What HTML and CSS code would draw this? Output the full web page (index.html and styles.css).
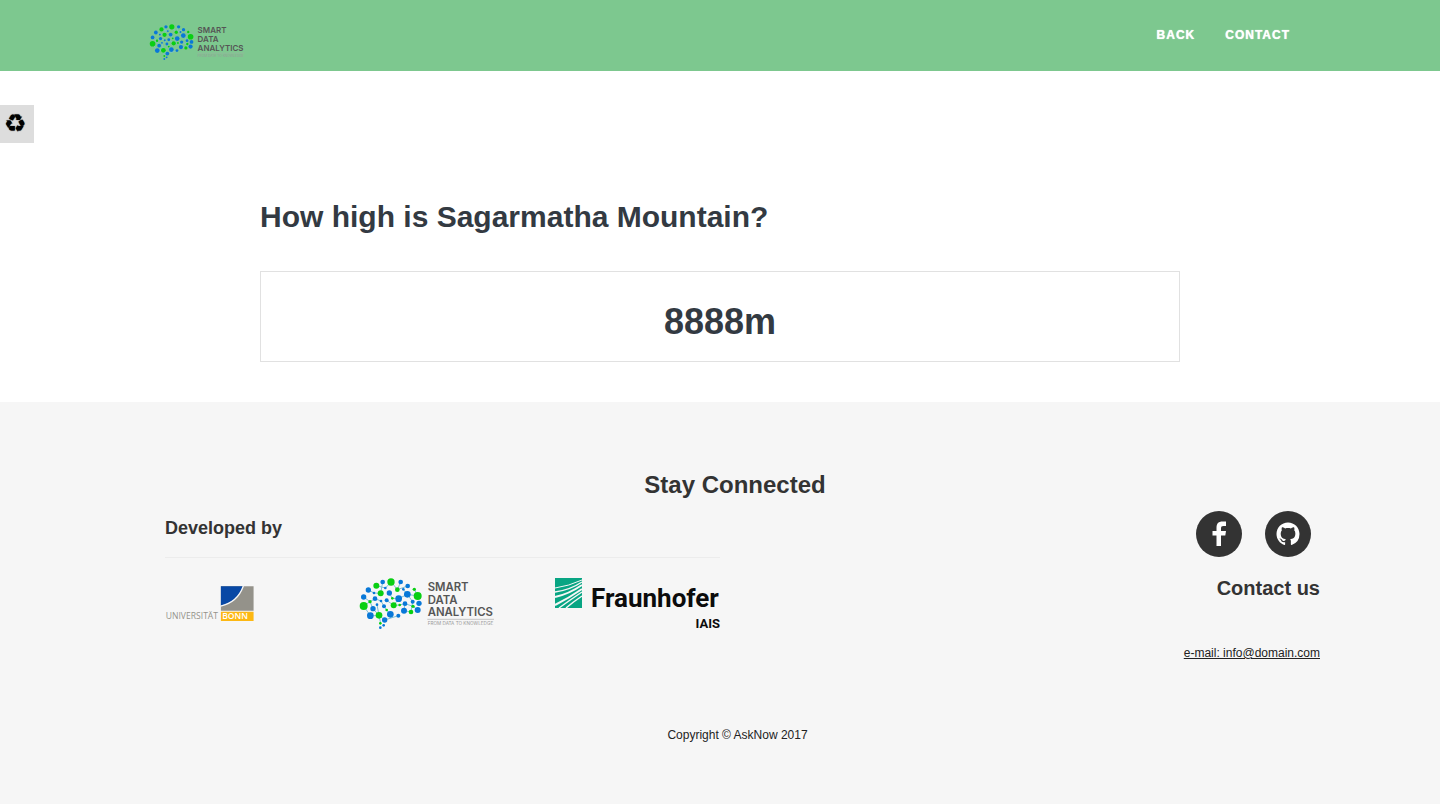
FILE: index.html
```html
<!DOCTYPE html>
<html lang="en">
<head>
<meta charset="utf-8">
<meta name="viewport" content="width=device-width, initial-scale=1">
<title>AskNow</title>
<link rel="stylesheet" href="styles.css">
</head>
<body>
<header class="topbar">
  <div class="topbar-inner">
    <a class="brand" href="#" aria-label="Smart Data Analytics"><svg class="brand-logo" viewBox="30 22 405 153"><use href="#sda"/></svg></a>
    <nav class="nav">
      <a href="#">BACK</a>
      <a href="#contact">CONTACT</a>
    </nav>
  </div>
</header>
<button class="recycle" type="button" aria-label="Reset">♻</button>

<main class="answer">
  <h1>How high is Sagarmatha Mountain?</h1>
  <div class="answer-box">8888m</div>
</main>

<footer class="footer" id="contact">
  <div class="footer-inner">
    <h2>Stay Connected</h2>
    <div class="footer-cols">
      <section class="developed">
        <h3>Developed by</h3>
        <hr>
        <div class="partners">
          <a href="#" aria-label="Universität Bonn">
            <svg class="bonn" viewBox="30 32 267 106">
              <path fill="#94928a" d="M198 33H297V107H198z"/>
              <path fill="#0848a5" d="M198 33H265Q248 80 198 92z"/>
              <path fill="none" stroke="#f6f6f6" stroke-width="4" d="M266 32Q249 81 197 93"/>
              <path fill="#fdb813" d="M198 110H297V138H198z"/>
              <text class="bonn-uni" x="31" y="132">UNIVERSITÄT</text>
              <text class="bonn-city" x="202" y="133">BONN</text>
            </svg>
          </a>
          <a href="#" aria-label="Smart Data Analytics">
            <svg class="sda" viewBox="30 22 405 153">
              <g id="sda">
                <path fill="none" stroke="#7fbfd6" stroke-width="3" d="M41 79L60 93L69 114L87 134L92 158M55 58L72 67L92 68L98 34M79 45L106 52L124 34L142 57L173 46M41 106L60 93L75 84L93 91L102 107L120 131M118 67L127 83L146 84L131 104L110 89M146 84L172 71L160 56M172 71L188 93L183 124L162 120L165 99L189 107L203 118M172 71L203 76L193 56M152 34L142 57M81 102L87 134L104 148L145 135M131 104L149 103L165 99M41 106L61 135H87"/>
                <g fill="#0878d8">
                  <circle cx="98" cy="34" r="7"/><circle cx="152" cy="34" r="7"/><circle cx="173" cy="46" r="7"/><circle cx="55" cy="58" r="8"/><circle cx="106" cy="52" r="4"/><circle cx="160" cy="56" r="4"/><circle cx="118" cy="67" r="8"/><circle cx="72" cy="67" r="4"/><circle cx="41" cy="79" r="8"/><circle cx="75" cy="84" r="7"/><circle cx="146" cy="84" r="10"/><circle cx="172" cy="71" r="10"/><circle cx="93" cy="91" r="4"/><circle cx="110" cy="89" r="6"/><circle cx="165" cy="99" r="7"/><circle cx="188" cy="93" r="6"/><circle cx="207" cy="98" r="8"/><circle cx="102" cy="107" r="6"/><circle cx="81" cy="102" r="4"/><circle cx="69" cy="114" r="8"/><circle cx="61" cy="135" r="10"/><circle cx="121" cy="131" r="10"/><circle cx="145" cy="135" r="6"/><circle cx="162" cy="120" r="9"/><circle cx="203" cy="118" r="9"/><circle cx="104" cy="148" r="8"/><circle cx="101" cy="164" r="4"/><circle cx="91" cy="171" r="4"/>
                </g>
                <g fill="#09cf12">
                  <circle cx="123" cy="34" r="11"/><circle cx="79" cy="45" r="9"/><circle cx="142" cy="57" r="7"/><circle cx="193" cy="56" r="5"/><circle cx="92" cy="68" r="9"/><circle cx="203" cy="76" r="12"/><circle cx="127" cy="83" r="4"/><circle cx="60" cy="93" r="5"/><circle cx="41" cy="106" r="12"/><circle cx="131" cy="104" r="9"/><circle cx="149" cy="103" r="4"/><circle cx="189" cy="107" r="5"/><circle cx="110" cy="118" r="4"/><circle cx="87" cy="134" r="10"/><circle cx="183" cy="124" r="7"/><circle cx="91" cy="158" r="4"/>
                </g>
                <g class="sda-name">
                  <text x="233" y="62">SMART</text>
                  <text x="233" y="100">DATA</text>
                  <text x="233" y="135">ANALYTICS</text>
                </g>
                <path d="M232 146H432" stroke="#aaa" stroke-width="2"/>
                <text class="sda-tag" x="233" y="162">FROM DATA TO KNOWLEDGE</text>
              </g>
            </svg>
          </a>
          <a href="#" aria-label="Fraunhofer IAIS">
            <svg class="fraunhofer" viewBox="0 0 165 50">
              <path fill="#08a583" d="M0 0H27V30H0z"/>
              <g fill="none" stroke="#f6f6f6">
                <path stroke-width="1" d="M0 10Q14 8 27 2"/>
                <path stroke-width="1.500" d="M0 14Q15 12 27 4"/>
                <path stroke-width="2" d="M0 19Q14 16 27 7"/>
                <path stroke-width="2" d="M0 27Q14 20 27 11"/>
                <path stroke-width="1.500" d="M4 30Q15 22 27 14M11 30Q18 24 27 18"/>
              </g>
              <text class="fh-name" x="36" y="29">Fraunhofer</text>
              <text class="fh-unit" x="165" y="50" text-anchor="end">IAIS</text>
            </svg>
          </a>
        </div>
      </section>
      <section class="contact">
        <div class="social">
          <a href="#" aria-label="Facebook">
            <svg viewBox="0 0 46 46"><path fill="#fff" d="M20.500 35V24.500h-4v-4.500h4v-3.500c0-4 2-6 6-6h3.500v4.500h-2.500c-2 0-2.500.8-2.500 2.500v2.500h5l-.7 4.500h-4.300v10.500z"/></svg>
          </a>
          <a href="#" aria-label="GitHub">
            <svg viewBox="-8 -8 32 32"><path fill="#fff" d="M8 0C3.580 0 0 3.580 0 8c0 3.540 2.290 6.530 5.470 7.590.4.070.55-.17.55-.38 0-.19-.01-.82-.01-1.490-2.010.37-2.530-.49-2.690-.94-.09-.23-.48-.94-.82-1.130-.28-.15-.68-.52-.01-.53.63-.01 1.080.58 1.230.82.72 1.210 1.870.87 2.330.66.070-.52.280-.87.510-1.070-1.780-.2-3.640-.89-3.640-3.950 0-.87.31-1.590.82-2.150-.08-.2-.36-1.020.08-2.120 0 0 .67-.21 2.200.82.64-.18 1.320-.27 2-.27s1.360.09 2 .27c1.530-1.040 2.200-.82 2.200-.82.44 1.100.16 1.920.08 2.120.51.56.82 1.270.82 2.150 0 3.070-1.870 3.750-3.650 3.950.29.25.54.73.54 1.480 0 1.070-.01 1.930-.01 2.200 0 .21.15.46.55.38A8.010 8.010 0 0 0 16 8c0-4.420-3.580-8-8-8z"/></svg>
          </a>
        </div>
        <h3>Contact us</h3>
        <a class="email" href="mailto:info@domain.com">e-mail: info@domain.com</a>
      </section>
    </div>
    <p class="copyright">Copyright © AskNow 2017</p>
  </div>
</footer>
</body>
</html>
```

FILE: styles.css
```css
* { box-sizing: border-box; }
body {
  margin: 0;
  min-height: 100vh;
  display: flex;
  flex-direction: column;
  font: 12px/20px "Liberation Sans", Arial, sans-serif;
  color: #222;
  background: #fff;
}
h1, h2, h3, p { margin: 0; }
a { color: inherit; text-decoration: none; }
svg { display: block; overflow: visible; }

.topbar { background: #7dc88f; }
.topbar-inner {
  max-width: 1140px;
  margin: 0 auto;
  padding: 24px 0 11px;
  display: flex;
  justify-content: space-between;
  align-items: flex-start;
}
.brand-logo { width: 95px; height: 36px; }
.nav {
  display: flex;
  gap: 30px;
  padding-top: 1px;
  font-weight: 900;
  letter-spacing: 1px;
  color: #fff;
  text-shadow: 0 0 1px #fff;
}

.recycle {
  position: absolute;
  left: 0;
  top: 105px;
  width: 34px;
  height: 38px;
  padding: 0 4px;
  border: 0;
  background: #ddd;
  color: #000;
  text-align: left;
  font: 25px/38px "DejaVu Sans", sans-serif;
  text-shadow: 0 0 1px #000;
}

.answer {
  width: 100%;
  max-width: 920px;
  margin: 0 auto;
  padding: 128px 0 40px;
  color: #333a42;
}
.answer h1 { font-size: 30px; line-height: 36px; }
.answer-box {
  margin-top: 36px;
  padding: 30px 0 19px;
  border: 1px solid #e1e1e1;
  font-size: 36px;
  line-height: 40px;
  font-weight: bold;
  text-align: center;
}

.footer {
  flex: 1;
  padding: 70px 0 58px 30px;
  background: #f6f6f6;
}
.footer-inner { max-width: 1170px; margin: 0 auto; padding: 0 15px; }
.footer h2, .footer h3 { color: #333; }
.footer h2 { font-size: 24px; line-height: 26px; text-align: center; }
.footer-cols {
  display: grid;
  grid-template-columns: 1fr 1fr;
  gap: 30px;
  margin-top: 13px;
}
.developed { padding-top: 7px; }
.developed h3 { font-size: 18px; line-height: 20px; }
.developed hr { margin: 19px 0 20px; border: 0; border-top: 1px solid #ececec; }
.partners { display: grid; grid-template-columns: repeat(3, 1fr); gap: 30px; }
.bonn { width: 89px; height: 35px; margin-top: 8px; }
.sda { width: 135px; height: 51px; }
.fraunhofer { width: 165px; height: 50px; }
.sda-name { font: 600 34px Inter, sans-serif; fill: #555; }
.sda-tag { font: 14px Inter, sans-serif; fill: #999; }
.bonn-uni { font: 500 26px "Open Sans", sans-serif; fill: #94928a; }
.bonn-city { font: 600 26px "Open Sans", sans-serif; fill: #fff; }
.fh-name { font: bold 26px Roboto, sans-serif; fill: #0c0c0c; }
.fh-unit { font: bold 13px Roboto, sans-serif; fill: #0c0c0c; }

.contact {
  display: flex;
  flex-direction: column;
  align-items: flex-end;
  margin-right: -15px;
}
.social { display: flex; gap: 23px; padding-right: 9px; }
.social a {
  width: 46px;
  height: 46px;
  border-radius: 50%;
  background: #333;
}
.contact h3 { margin-top: 20px; font-size: 20px; line-height: 22px; }
.email { margin-top: 44px; text-decoration: underline; }
.copyright { margin-top: 62px; padding-left: 5px; text-align: center; }
```
